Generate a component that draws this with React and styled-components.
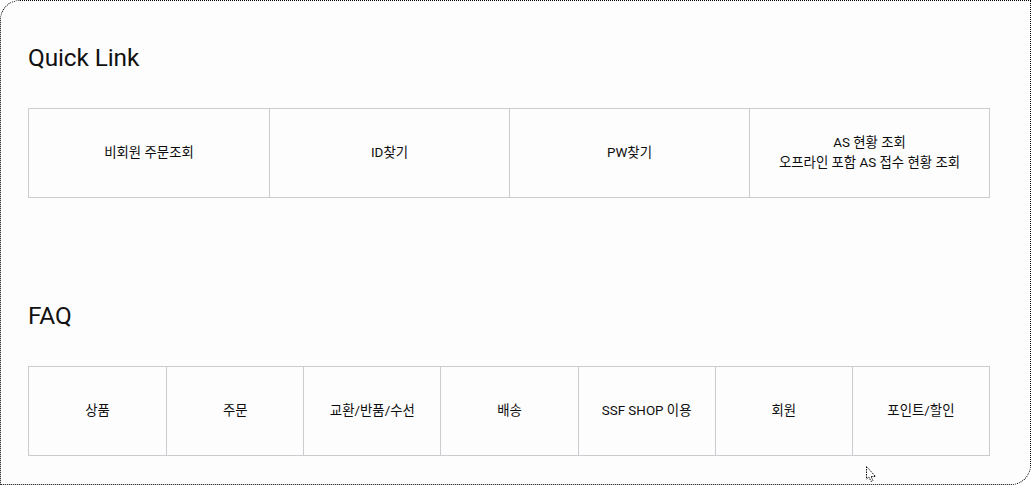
import React from "react";
import styled, { createGlobalStyle } from "styled-components";

const Global = createGlobalStyle`
  html, body { margin: 0; padding: 0; background: #ffffff; }
  * { box-sizing: border-box; }
`;

const Frame = styled.div`
  position: relative;
  width: 1031px;
  height: 485px;
  border: 1px dotted #000;
  border-radius: 20px 0 20px 0;
  background: #fdfdfd;
  padding: 41px 40px 0 27px;
  font-family: Roboto, "Noto Sans CJK KR", sans-serif;
  color: #111;
  overflow: hidden;
`;

const Section = styled.section`
  display: flex;
  flex-direction: column;
  margin-bottom: ${(p) => p.$gap || 0}px;
`;

const Title = styled.h2`
  margin: 0 0 ${(p) => p.$below}px 0;
  font-size: 24.4px;
  font-weight: 400;
  line-height: 32px;
  letter-spacing: -0.1px;
`;

const Grid = styled.div`
  display: grid;
  grid-template-columns: repeat(${(p) => p.$cols}, 1fr);
  border: 1px solid #cbcbd0;
  width: 962px;
  height: 90px;
`;

const Cell = styled.a`
  display: flex;
  flex-direction: column;
  align-items: center;
  justify-content: center;
  text-align: center;
  font-size: 13.4px;
  line-height: 20px;
  color: #0d0d0d;
  text-decoration: none;
  border-left: ${(p) => (p.$first ? "none" : "1px solid #cbcbd0")};
`;

const Cursor = styled.svg`
  position: absolute;
  left: 864px;
  top: 464px;
`;

const quick = [
  ["비회원 주문조회"],
  ["ID찾기"],
  ["PW찾기"],
  ["AS 현황 조회", "오프라인 포함 AS 접수 현황 조회"],
];

const faq = ["상품", "주문", "교환/반품/수선", "배송", "SSF SHOP 이용", "회원", "포인트/할인"];

export default function App() {
  return (
    <>
      <Global />
      <Frame>
        <Section $gap={102}>
          <Title $below={34}>Quick Link</Title>
          <Grid $cols={4}>
            {quick.map((lines, i) => (
              <Cell key={i} $first={i === 0} href="#">
                {lines.map((l) => (
                  <span key={l}>{l}</span>
                ))}
              </Cell>
            ))}
          </Grid>
        </Section>
        <Section>
          <Title $below={34}>FAQ</Title>
          <Grid $cols={7}>
            {faq.map((l, i) => (
              <Cell key={l} $first={i === 0} href="#">
                {l}
              </Cell>
            ))}
          </Grid>
        </Section>
        <Cursor width="14" height="18" viewBox="0 0 14 18">
          <path
            d="M1.5 1.5 L1.5 14 L4 12 L6 16.5 L8 15.5 L6 11.5 L10.5 11.5 Z"
            fill="#fff"
            stroke="#111"
            strokeWidth="1"
            strokeDasharray="1.5 1"
          />
        </Cursor>
      </Frame>
    </>
  );
}
